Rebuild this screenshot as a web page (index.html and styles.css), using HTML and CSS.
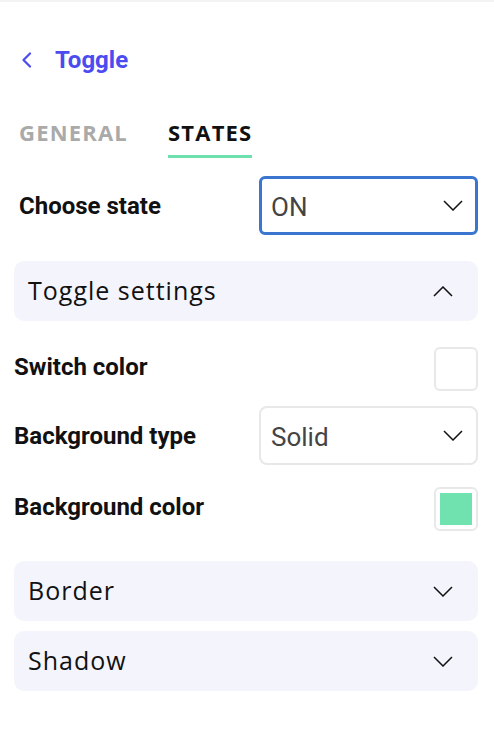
FILE: index.html
```html
<!DOCTYPE html>
<html lang="en">
<head>
<meta charset="utf-8">
<title>Toggle</title>
<link rel="stylesheet" href="styles.css">
</head>
<body>
<div class="topbar"></div>
<div class="panel">
  <div class="header">
    <svg class="back" width="12" height="16" viewBox="0 0 12 16"><path d="M9 1.5 L2.5 8 L9 14.5" fill="none" stroke="#4b4bf0" stroke-width="2.2" stroke-linecap="round" stroke-linejoin="round"/></svg>
    <span class="title">Toggle</span>
  </div>
  <div class="tabs">
    <div class="tab">GENERAL</div>
    <div class="tab active">STATES</div>
  </div>
  <div class="row row-state">
    <span class="label label-state">Choose state</span>
    <div class="select focused">
      <span>ON</span>
      <svg class="chev" width="20" height="11" viewBox="0 0 20 11"><path d="M1 1 L10 10 L19 1" fill="none" stroke="#111" stroke-width="1.5"/></svg>
    </div>
  </div>
  <div class="accordion acc-open">
    <span>Toggle settings</span>
    <svg class="chev" width="20" height="11" viewBox="0 0 20 11"><path d="M1 10 L10 1 L19 10" fill="none" stroke="#111" stroke-width="1.5"/></svg>
  </div>
  <div class="row row-switch">
    <span class="label label-up">Switch color</span>
    <div class="swatch"></div>
  </div>
  <div class="row row-bgtype">
    <span class="label">Background type</span>
    <div class="select">
      <span>Solid</span>
      <svg class="chev" width="20" height="11" viewBox="0 0 20 11"><path d="M1 1 L10 10 L19 1" fill="none" stroke="#111" stroke-width="1.5"/></svg>
    </div>
  </div>
  <div class="row row-bgcolor">
    <span class="label label-up">Background color</span>
    <div class="swatch"><div class="fill"></div></div>
  </div>
  <div class="accordion acc-border">
    <span>Border</span>
    <svg class="chev" width="20" height="11" viewBox="0 0 20 11"><path d="M1 1 L10 10 L19 1" fill="none" stroke="#111" stroke-width="1.5"/></svg>
  </div>
  <div class="accordion acc-shadow">
    <span>Shadow</span>
    <svg class="chev" width="20" height="11" viewBox="0 0 20 11"><path d="M1 1 L10 10 L19 1" fill="none" stroke="#111" stroke-width="1.5"/></svg>
  </div>
</div>
</body>
</html>
```
FILE: styles.css
```css
html, body {
  margin: 0;
  padding: 0;
  background: #ffffff;
}
body {
  font-family: Roboto, "Liberation Sans", sans-serif;
  color: #111;
}
.topbar {
  height: 2px;
  background: #f3f3f3;
}
.panel {
  padding: 0 16px 0 14px;
}
.header {
  margin-top: 38px;
  height: 40px;
  display: flex;
  align-items: center;
  padding-left: 7px;
}
.back {
  display: block;
}
.title {
  margin-left: 22px;
  font-size: 24px;
  font-weight: 700;
  color: #4b4bf0;
}
.tabs {
  margin-top: 38px;
  display: flex;
  padding-left: 5px;
  gap: 40px;
}
.tab {
  font-family: "Open Sans", "DejaVu Sans", sans-serif;
  font-size: 22px;
  font-weight: 700;
  letter-spacing: 1.2px;
  line-height: 28px;
  color: #aaaaaa;
  padding-bottom: 9px;
  border-bottom: 3px solid transparent;
}
.tab.active {
  color: #111;
  border-bottom-color: #6ee0ae;
}
.row {
  display: flex;
  align-items: center;
  justify-content: space-between;
}
.label {
  font-size: 24px;
  font-weight: 700;
  color: #111;
}
.label-up {
  margin-bottom: 5px;
}
.label-state {
  padding-left: 5px;
}
.row-state {
  margin-top: 18px;
}
.select {
  box-sizing: border-box;
  width: 219px;
  height: 59px;
  border: 2px solid #e8e8e8;
  border-radius: 8px;
  display: flex;
  align-items: center;
  justify-content: space-between;
  padding: 0 13px 0 10px;
  font-size: 26px;
  color: #444;
}
.select.focused {
  border-color: #3a76d0;
  border-width: 3px;
  border-radius: 6px;
  padding-left: 9px;
  padding-right: 12px;
}
.select span {
  margin-top: 3px;
}
.chev {
  display: block;
}
.accordion {
  box-sizing: border-box;
  height: 60px;
  border-radius: 10px;
  background: #f4f4fd;
  display: flex;
  align-items: center;
  justify-content: space-between;
  padding: 0 25px 0 14px;
  font-family: "Open Sans", "DejaVu Sans", sans-serif;
  font-size: 25px;
  font-weight: 500;
  letter-spacing: 1px;
  color: #111;
}
.accordion span {
  margin-bottom: 3px;
}
.acc-open {
  margin-top: 26px;
}
.row-switch {
  margin-top: 26px;
}
.swatch {
  box-sizing: border-box;
  width: 44px;
  height: 44px;
  border: 2px solid #e8e8e8;
  border-radius: 6px;
  padding: 4px;
}
.fill {
  width: 100%;
  height: 100%;
  background: #70e2b0;
}
.row-bgtype {
  margin-top: 15px;
}
.row-bgcolor {
  margin-top: 22px;
}
.acc-border {
  margin-top: 30px;
}
.acc-shadow {
  margin-top: 10px;
}
```
